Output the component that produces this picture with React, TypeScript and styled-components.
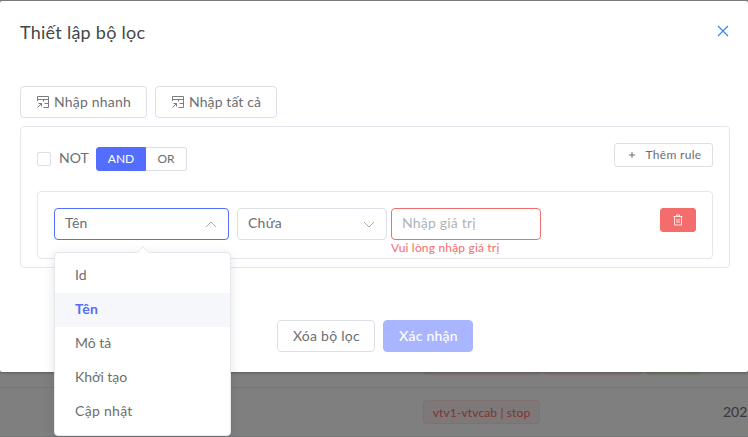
import React from 'react';
import styled, { createGlobalStyle, css } from 'styled-components';

const color = {
  primary: '#536dfe',
  primaryDisabled: '#a9b6ff',
  danger: '#f56c6c',
  text: '#6c6e72',
  title: '#45464a',
  placeholder: '#b0b3b9',
  border: '#dcdfe6',
  panelBorder: '#e4e7ed',
};

const GlobalStyle = createGlobalStyle`
  * { box-sizing: border-box; }
  body { margin: 0; font-family: Lato, 'Noto Sans', sans-serif; font-size: 14px; color: ${color.text}; }
  button, input { font: inherit; letter-spacing: inherit; margin: 0; }
  svg { display: block; flex: none; }
`;

const Page = styled.div`
  position: relative;
  width: 748px;
  height: 437px;
  overflow: hidden;
  background: #fff;
`;

const Table = styled.div`
  display: flex;
  flex-direction: column;
  justify-content: flex-end;
  height: 100%;
`;

const TableRow = styled.div`
  display: flex;
  align-items: center;
  gap: 4px;
  height: 49px;
  padding-left: 423px;
  border-bottom: 1px solid #ebeef5;
`;

const Tag = styled.span<{ $tone?: 'success'; $width: number }>`
  display: flex;
  align-items: center;
  justify-content: center;
  flex: none;
  width: ${p => p.$width}px;
  height: 24px;
  border: 1px solid ${p => (p.$tone ? '#e1f3d8' : '#fde2e2')};
  border-radius: 4px;
  background: ${p => (p.$tone ? '#e4f7da' : '#fef0f0')};
  color: ${color.danger};
  font-size: 12px;
  letter-spacing: 0.14px;
`;

const DateCell = styled.span`
  margin-left: 179px;
  padding-bottom: 1px;
  white-space: nowrap;
`;

const Overlay = styled.div`
  position: absolute;
  inset: 0;
  padding-top: 1px;
  background: rgba(0, 0, 0, 0.5);
`;

const Dialog = styled.section`
  height: 371px;
  padding: 20px 19px 20px 20px;
  border-radius: 2px;
  background: #fff;
  box-shadow: 0 1px 3px rgba(0, 0, 0, 0.3);
`;

const DialogHeader = styled.header`
  display: flex;
  align-items: flex-start;
  justify-content: space-between;
  height: 65px;
`;

const Title = styled.h1`
  margin: 0;
  font-size: 18px;
  line-height: 23px;
  font-weight: 400;
  letter-spacing: 0.26px;
  color: ${color.title};
`;

const CloseButton = styled.button`
  display: flex;
  padding: 4px 0 0;
  border: 0;
  background: none;
  color: #2f86e8;
`;

const Button = styled.button<{
  $width: number;
  $small?: boolean;
  $variant?: 'disabled' | 'danger';
  $tracking?: number;
  $gap?: number;
}>`
  display: flex;
  align-items: center;
  justify-content: center;
  gap: ${p => p.$gap ?? 4}px;
  width: ${p => p.$width}px;
  height: ${p => (p.$small ? 24 : 32)}px;
  padding: 0 0 ${p => (p.$small ? 1 : 2)}px;
  border: 1px solid ${color.border};
  border-radius: ${p => (p.$small ? 3 : 4)}px;
  background: #fff;
  color: ${color.text};
  font-size: ${p => (p.$small ? 12 : 14)}px;
  letter-spacing: ${p => p.$tracking ?? 0.2}px;
  white-space: nowrap;
  ${p => p.$variant === 'disabled' && css`
    border-color: ${color.primaryDisabled};
    background: ${color.primaryDisabled};
    color: #fff;
    font-weight: 500;
  `}
  ${p => p.$variant === 'danger' && css`
    border-color: ${color.danger};
    background: ${color.danger};
    color: #fff;
  `}
`;

const Toolbar = styled.div`
  display: flex;
  gap: 8px;
  svg { margin-top: 2px; }
`;

const RuleGroup = styled.div`
  width: 710px;
  height: 142px;
  margin-top: 8px;
  padding: 16px;
  border: 1px solid ${color.panelBorder};
  border-radius: 4px;
`;

const GroupHeader = styled.div`
  display: flex;
  justify-content: space-between;
  height: 48px;
`;

const Conditions = styled.div`
  display: flex;
  align-items: center;
  height: 24px;
  margin-top: 4px;
`;

const NotLabel = styled.label`
  display: flex;
  align-items: center;
  gap: 8px;
  width: 59px;
  line-height: 16px;
  padding-bottom: 2px;
`;

const Checkbox = styled.input`
  appearance: none;
  width: 14px;
  height: 14px;
  margin-top: 2px;
  border: 1px solid ${color.border};
  border-radius: 2px;
  background: #fff;
`;

const Switch = styled.button<{ $active?: boolean }>`
  width: ${p => (p.$active ? 50 : 41)}px;
  height: 24px;
  padding: 0;
  border: 1px solid ${p => (p.$active ? color.primary : color.border)};
  border-left-width: ${p => (p.$active ? 1 : 0)}px;
  border-radius: ${p => (p.$active ? '3px 0 0 3px' : '0 3px 3px 0')};
  background: ${p => (p.$active ? color.primary : '#fff')};
  color: ${p => (p.$active ? '#fff' : color.text)};
  font-size: 12px;
  line-height: 22px;
`;

const Rule = styled.div`
  display: flex;
  align-items: flex-start;
  height: 68px;
  padding: 16px;
  border: 1px solid ${color.panelBorder};
  border-radius: 4px;
`;

const SelectBox = styled.div<{ $width: number; $open?: boolean }>`
  position: relative;
  display: flex;
  align-items: center;
  justify-content: space-between;
  width: ${p => p.$width}px;
  height: 32px;
  margin-right: ${p => (p.$open ? 8 : 4)}px;
  padding: 0 11px 3px 10px;
  border: 1px solid ${p => (p.$open ? color.primary : color.border)};
  border-radius: 4px;
  letter-spacing: 0.25px;
  svg { margin-top: 3px; }
`;

const Field = styled.div`
  display: flex;
  flex-direction: column;
  width: 150px;
  margin-right: auto;
`;

const ValueInput = styled.input`
  width: 150px;
  height: 32px;
  padding: 0 10px 3px;
  border: 1px solid ${color.danger};
  border-radius: 4px;
  outline: 0;
  letter-spacing: 0.2px;
  &::placeholder { color: ${color.placeholder}; opacity: 1; }
`;

const ErrorText = styled.span`
  font-size: 12px;
  line-height: 16px;
  color: ${color.danger};
  letter-spacing: 0.18px;
  white-space: nowrap;
`;

const Menu = styled.ul`
  position: absolute;
  z-index: 2;
  top: 43px;
  left: -1px;
  width: 177px;
  height: 184px;
  margin: 0;
  padding: 6px 0;
  border: 1px solid ${color.panelBorder};
  border-radius: 4px;
  background: #fff;
  box-shadow: 0 2px 12px rgba(0, 0, 0, 0.1);
  list-style: none;
  &::before {
    content: '';
    position: absolute;
    top: -5px;
    left: 83px;
    width: 9px;
    height: 9px;
    border: 1px solid ${color.panelBorder};
    border-width: 1px 0 0 1px;
    background: #fff;
    clip-path: polygon(0 0, 100% 0, 0 100%);
    transform: rotate(45deg);
  }
`;

const MenuItem = styled.li<{ $selected?: boolean; $tracking?: number }>`
  height: 34px;
  padding: 0 20px;
  line-height: 32px;
  letter-spacing: ${p => p.$tracking ?? 0}px;
  ${p => p.$selected && css`
    background: #f5f7fa;
    color: ${color.primary};
    font-weight: 700;
  `}
`;

const Footer = styled.footer`
  display: flex;
  gap: 8px;
  margin: 52px 0 0 257px;
  ${Button} { padding-left: 1px; }
`;

const ImportIcon = () => (
  <svg width="14" height="14" viewBox="0 0 14 14" fill="none" stroke="currentColor" strokeWidth="0.9">
    <path d="M1.5 6V1.5h11v11H7.5M1.5 4.5h11M7.5 4.5v2M2.5 8.5h3v3M5.5 8.5l-4 4M8.5 8.5h4" />
  </svg>
);

const Chevron = ({ up }: { up?: boolean }) => (
  <svg width="12" height="12" viewBox="0 0 12 12" fill="none" stroke="#a8abb2" strokeWidth="1">
    <path d={up ? 'M1 9l5-5 5 5' : 'M1 4l5 5 5-5'} />
  </svg>
);

const CloseIcon = () => (
  <svg width="12" height="12" viewBox="0 0 12 12" fill="none" stroke="currentColor" strokeWidth="1.1">
    <path d="M1 1l10 10M11 1L1 11" />
  </svg>
);

const PlusIcon = () => (
  <svg width="12" height="12" viewBox="0 0 12 12" fill="none" stroke="currentColor" strokeWidth="1">
    <path d="M6 3v6M3 6h6" />
  </svg>
);

const TrashIcon = () => (
  <svg width="12" height="12" viewBox="0 0 12 12" fill="none" stroke="currentColor" strokeWidth="0.8">
    <path d="M1.5 2.5h9M4.5 2.5V1h3v1.5M2.5 2.5v8.5h7V2.5M5 4.7v4.3M7 4.7v4.3" />
  </svg>
);

export default function App() {
  return (
    <Page>
      <GlobalStyle />
      <Table>
        <TableRow>
          <Tag $width={117} />
          <Tag $width={98} />
          <Tag $width={55} $tone="success" />
        </TableRow>
        <TableRow>
          <Tag $width={117}>vtv1-vtvcab | stop</Tag>
          <DateCell>202</DateCell>
        </TableRow>
      </Table>
      <Overlay>
        <Dialog>
          <DialogHeader>
            <Title>Thiết lập bộ lọc</Title>
            <CloseButton aria-label="Đóng"><CloseIcon /></CloseButton>
          </DialogHeader>
          <Toolbar>
            <Button $width={127}><ImportIcon />Nhập nhanh</Button>
            <Button $width={122} $tracking={0.1}><ImportIcon />Nhập tất cả</Button>
          </Toolbar>
          <RuleGroup>
            <GroupHeader>
              <Conditions>
                <NotLabel><Checkbox type="checkbox" />NOT</NotLabel>
                <Switch $active>AND</Switch>
                <Switch>OR</Switch>
              </Conditions>
              <Button $width={99} $small $gap={8} $tracking={0.3}><PlusIcon />Thêm rule</Button>
            </GroupHeader>
            <Rule>
              <SelectBox $width={175} $open>
                Tên<Chevron up />
                <Menu>
                  <MenuItem>Id</MenuItem>
                  <MenuItem $selected $tracking={0.3}>Tên</MenuItem>
                  <MenuItem>Mô tả</MenuItem>
                  <MenuItem $tracking={-0.05}>Khởi tạo</MenuItem>
                  <MenuItem $tracking={0.3}>Cập nhật</MenuItem>
                </Menu>
              </SelectBox>
              <SelectBox $width={150}>Chứa<Chevron /></SelectBox>
              <Field>
                <ValueInput placeholder="Nhập giá trị" />
                <ErrorText>Vui lòng nhập giá trị</ErrorText>
              </Field>
              <Button $width={36} $small $variant="danger" aria-label="Xóa"><TrashIcon /></Button>
            </Rule>
          </RuleGroup>
          <Footer>
            <Button $width={98} $tracking={0.25}>Xóa bộ lọc</Button>
            <Button $width={90} $variant="disabled" $tracking={0.25}>Xác nhận</Button>
          </Footer>
        </Dialog>
      </Overlay>
    </Page>
  );
}
